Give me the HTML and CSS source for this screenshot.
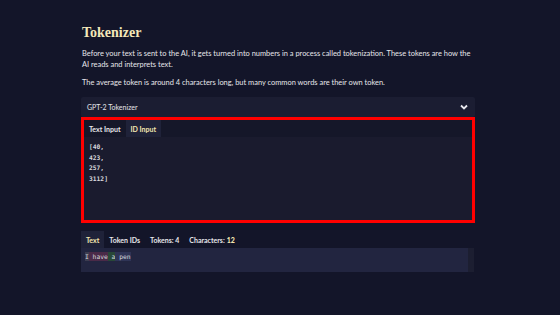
FILE: index.html
```html
<!DOCTYPE html>
<html lang="en">
<head>
    <meta charset="UTF-8">
    <title>Tokenizer</title>
    <link rel="stylesheet" href="styles.css">
</head>
<body>
    <main class="page">
        <h1 class="title">Tokenizer</h1>
        <p class="lead">Before your text is sent to the AI, it gets turned into numbers in a process called tokenization. These tokens are how the AI reads and interprets text.</p>
        <p class="lead">The average token is around 4 characters long, but many common words are their own token.</p>

        <div class="select">
            <span>GPT-2 Tokenizer</span>
            <svg class="chevron" width="8" height="6" viewBox="0 0 8 6"><path d="M1 1.5 L4 4.5 L7 1.5" fill="none" stroke="#e8e8ee" stroke-width="1.8"/></svg>
        </div>

        <section class="editor">
            <div class="tabs">
                <span class="tab">Text Input</span>
                <span class="tab active">ID Input</span>
            </div>
            <pre class="ids">[40,
423,
257,
3112]</pre>
        </section>

        <section class="output">
            <div class="tabs out-tabs">
                <span class="tab active">Text</span>
                <span class="tab">Token IDs</span>
                <span class="stat">Tokens: 4</span>
                <span class="stat">Characters: <b>12</b></span>
            </div>
            <div class="tokens"><span class="tok t1">I</span><span class="tok t2"> have</span><span class="tok t3"> a</span><span class="tok t4"> pen</span></div>
        </section>
    </main>
</body>
</html>
```

FILE: styles.css
```css
body {
    margin: 0;
    background: #131529;
    color: #e6e6ea;
    font-family: 'Lato', 'Noto Sans', sans-serif;
}

.page {
    width: 394px;
    margin: 0 0 0 81px;
    padding-top: 25px;
}

.title {
    margin: 0 0 7px 1px;
    font-family: 'Liberation Serif', serif;
    font-size: 14px;
    font-weight: bold;
    color: #f3e7b9;
}

.lead {
    margin: 0 0 7px 1px;
    font-size: 7.45px;
    line-height: 11px;
}

.select {
    display: flex;
    align-items: center;
    justify-content: space-between;
    height: 20px;
    margin-top: 9px;
    padding: 0 7px 0 6px;
    background: #1b1d32;
    border-radius: 2px;
    font-size: 7px;
}

.editor {
    height: 100px;
    border: 3px solid #ff0000;
    background: #1a1b2e;
    display: flex;
    flex-direction: column;
}

.tabs {
    display: flex;
    height: 17px;
    background: #151729;
    font-size: 7px;
    font-weight: bold;
}

.tab {
    display: flex;
    align-items: center;
    padding: 0 5px;
}

.tab.active {
    background: #1f2239;
    color: #f3e7b0;
}

.ids {
    margin: 0;
    padding: 5px 5px;
    font-family: 'DejaVu Sans Mono', monospace;
    font-size: 6.3px;
    line-height: 10.5px;
    color: #d8d8de;
    font-weight: bold;
}

.output {
    margin-top: 8px;
}

.out-tabs {
    background: transparent;
}

.stat {
    display: flex;
    align-items: center;
    padding: 0 5px;
}

.stat b {
    color: #f3e7b0;
    margin-left: 2px;
}

.tokens {
    height: 24px;
    margin-right: 1px;
    padding: 5px 4px 0 4px;
    box-sizing: border-box;
    background: #222540;
    border-right: 6px solid #1c1e31;
    font-family: 'DejaVu Sans Mono', monospace;
    font-size: 6.3px;
    color: #d6d6dc;
    white-space: pre;
}

.tok {
    padding: 1px 0;
}

.t1 { background: #3c3d50; }
.t2 { background: #4a2a48; }
.t3 { background: #284838; }
.t4 { background: #2f3456; }
```
